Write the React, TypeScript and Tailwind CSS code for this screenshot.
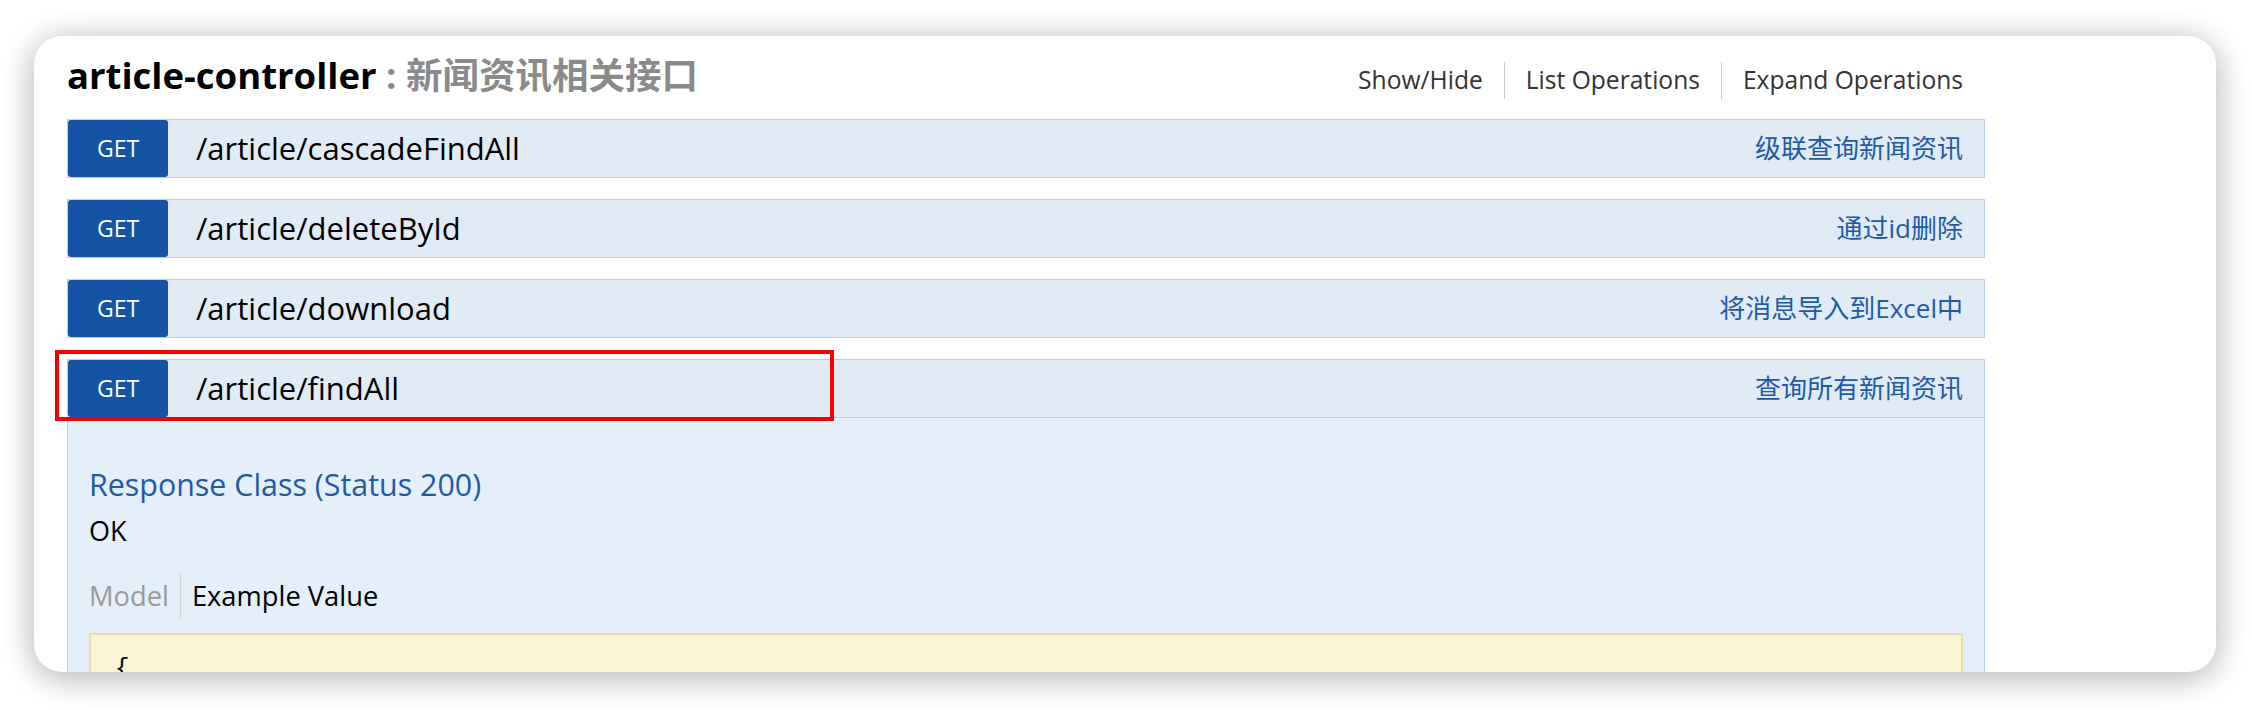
const endpoints = [
  { path: "/article/cascadeFindAll", summary: "级联查询新闻资讯" },
  { path: "/article/deleteById", summary: "通过id删除" },
  { path: "/article/download", summary: "将消息导入到Excel中" },
  { path: "/article/findAll", summary: "查询所有新闻资讯", open: true },
];

function Operation({ path, summary, open }: { path: string; summary: string; open?: boolean }) {
  return (
    <li>
      <div className="relative flex h-[59px] items-stretch border border-[#b5cfe8] bg-[#e1ebf5]">
        <span className="flex w-[100px] items-center justify-center rounded-[3px] bg-[#1554a5] text-[23px] text-white">
          GET
        </span>
        <span className="ml-[28px] flex items-center text-[31px] text-black">{path}</span>
        <span className="ml-auto flex items-center pr-[21px] text-[26px] text-[#1f5aa8]">{summary}</span>
        {open && (
          <div className="pointer-events-none absolute -left-[13px] -top-[10px] h-[71px] w-[779px] border-[4px] border-[#f50000]" />
        )}
      </div>
      {open && (
        <div className="border-x border-b border-[#b5cfe8] bg-[#e5eff9] px-[21px] pt-[47px]">
          <h4 className="text-[30.4px] leading-[40px] text-[#1f5aa8]">Response Class (Status 200)</h4>
          <p className="mt-[8px] text-[27px] leading-[36px] text-black">OK</p>
          <div className="mt-[24px] flex h-[46px] items-center text-[27.3px]">
            <span className="pr-[11px] text-[#999]">Model</span>
            <span className="h-full w-px bg-[#d4d4d4]" />
            <span className="pl-[11px] text-black">Example Value</span>
          </div>
          <div className="mt-[14px] h-[120px] border-2 border-[#e6dcae] bg-[#faf4d3] px-[24px] pt-[16px] font-['Liberation_Mono',monospace] text-[24px] text-black">
            {"{"}
          </div>
        </div>
      )}
    </li>
  );
}

export default function App() {
  return (
    <div className="min-h-[710px] bg-white pl-[34px] pt-[36px] font-['Open_Sans','Noto_Sans_CJK_SC',sans-serif]">
      <div className="h-[636px] w-[2182px] overflow-hidden rounded-[28px] bg-white pl-[33px] pt-[14px] shadow-[0_5px_34px_rgba(0,0,0,0.32)]">
        <div className="w-[1918px]">
          <div className="flex h-[50px] items-baseline pr-[22px]">
            <h2 className="text-[36.5px] font-bold leading-[50px]">
              <span className="text-black">article-controller</span>
              <span className="text-[#8a8a8a]"> : 新闻资讯相关接口</span>
            </h2>
            <ul className="ml-auto flex items-baseline text-[24.6px] text-[#333]">
              <li className="pr-[21px]">Show/Hide</li>
              <li className="border-l border-[#ccc] px-[21px]">List Operations</li>
              <li className="border-l border-[#ccc] pl-[21px]">Expand Operations</li>
            </ul>
          </div>
          <ul className="mt-[19px] flex flex-col gap-[21px]">
            {endpoints.map((e) => (
              <Operation key={e.path} {...e} />
            ))}
          </ul>
        </div>
      </div>
    </div>
  );
}
